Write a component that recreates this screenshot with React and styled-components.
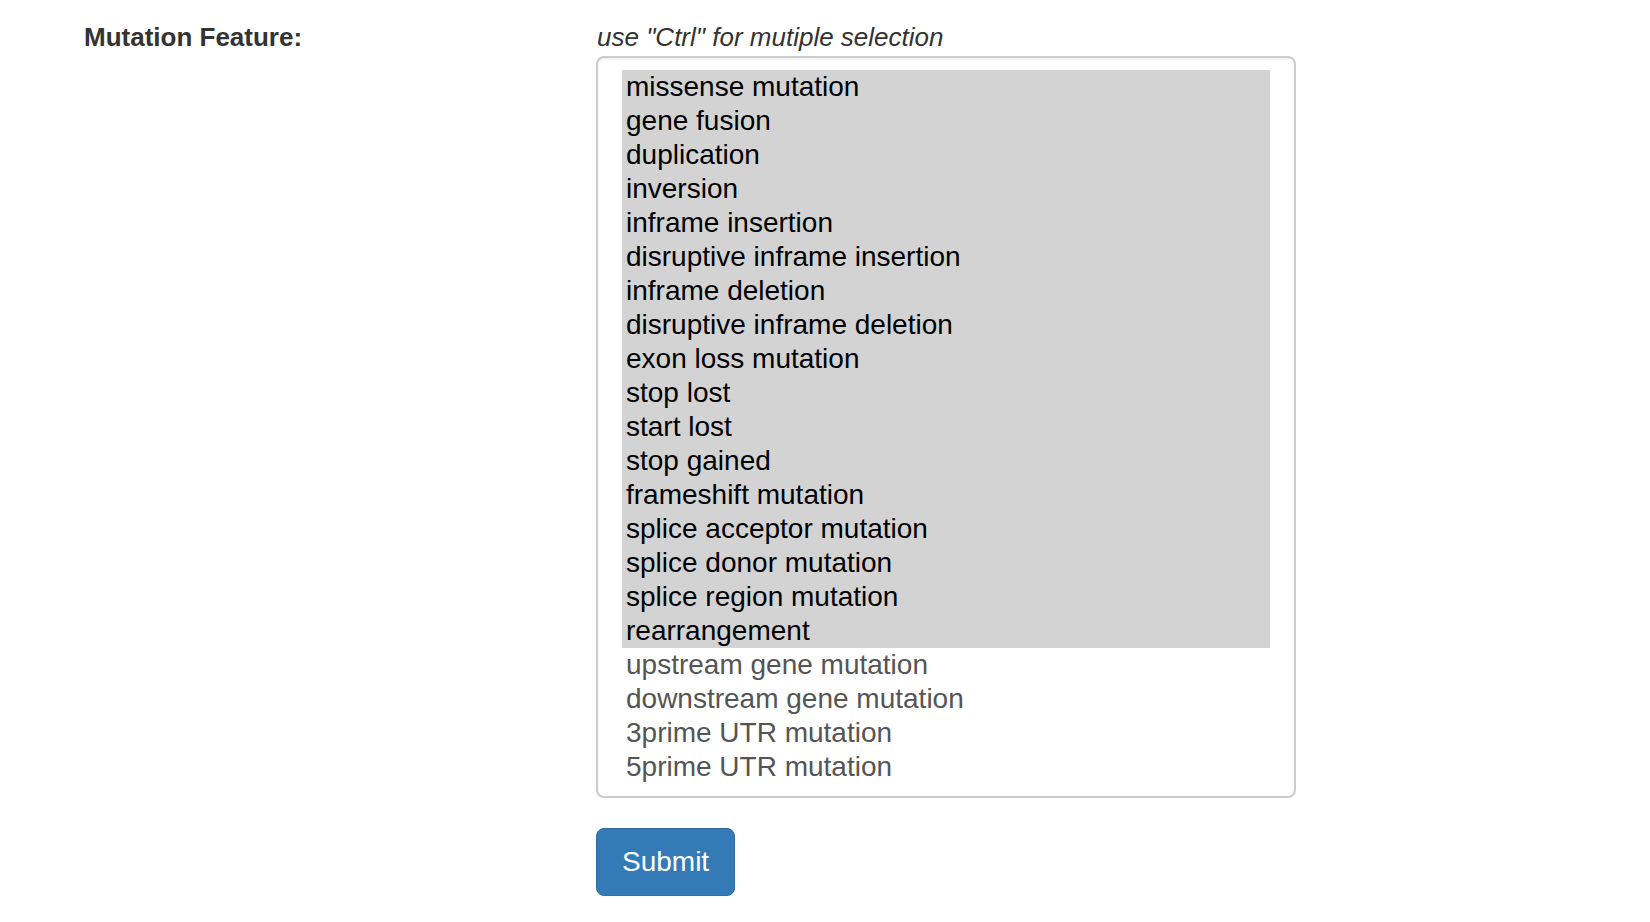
import React from "react";
import styled, { createGlobalStyle } from "styled-components";

const GlobalStyle = createGlobalStyle`
  html, body {
    margin: 0;
    padding: 0;
    background: #ffffff;
    font-family: "Liberation Sans", Arial, Helvetica, sans-serif;
  }
`;

const Page = styled.div`
  display: flex;
  align-items: flex-start;
  padding: 19px 0 0 84px;
`;

const Label = styled.div`
  width: 512px;
  flex-shrink: 0;
  font-size: 26px;
  line-height: 37px;
  font-weight: 700;
  color: #333333;
`;

const Field = styled.div`
  display: flex;
  flex-direction: column;
  align-items: flex-start;
`;

const Hint = styled.div`
  font-size: 26px;
  line-height: 37px;
  font-style: italic;
  color: #333333;
  padding-left: 1px;
`;

const ListBox = styled.div`
  box-sizing: border-box;
  width: 700px;
  border: 2px solid #cccccc;
  border-radius: 8px;
  padding: 12px 24px 12px 24px;
  background: #ffffff;
  box-shadow: inset 0 1px 2px rgba(0, 0, 0, 0.075);
`;

const Option = styled.div`
  font-size: 28px;
  line-height: 34px;
  height: 34px;
  padding-left: 4px;
  white-space: nowrap;
  color: ${(p) => (p.$selected ? "#000000" : "#555555")};
  background: ${(p) => (p.$selected ? "#d3d3d3" : "transparent")};
`;

const SubmitButton = styled.button`
  margin-top: 30px;
  box-sizing: border-box;
  height: 68px;
  padding: 0 25px 0 25px;
  font-family: "Liberation Sans", Arial, Helvetica, sans-serif;
  font-size: 28px;
  line-height: 40px;
  color: #ffffff;
  background: #337ab7;
  border: 1px solid #2e6da4;
  border-radius: 8px;
  cursor: pointer;
`;

const options = [
  ["missense mutation", true],
  ["gene fusion", true],
  ["duplication", true],
  ["inversion", true],
  ["inframe insertion", true],
  ["disruptive inframe insertion", true],
  ["inframe deletion", true],
  ["disruptive inframe deletion", true],
  ["exon loss mutation", true],
  ["stop lost", true],
  ["start lost", true],
  ["stop gained", true],
  ["frameshift mutation", true],
  ["splice acceptor mutation", true],
  ["splice donor mutation", true],
  ["splice region mutation", true],
  ["rearrangement", true],
  ["upstream gene mutation", false],
  ["downstream gene mutation", false],
  ["3prime UTR mutation", false],
  ["5prime UTR mutation", false],
];

export default function App() {
  return (
    <>
      <GlobalStyle />
      <Page>
        <Label>Mutation Feature:</Label>
        <Field>
          <Hint>use "Ctrl" for mutiple selection</Hint>
          <ListBox role="listbox" aria-multiselectable="true">
            {options.map(([name, sel]) => (
              <Option key={name} role="option" aria-selected={sel} $selected={sel}>
                {name}
              </Option>
            ))}
          </ListBox>
          <SubmitButton type="button">Submit</SubmitButton>
        </Field>
      </Page>
    </>
  );
}
